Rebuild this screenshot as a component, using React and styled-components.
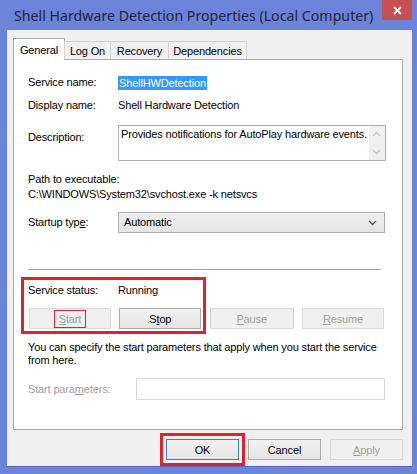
import styled, { createGlobalStyle } from "styled-components";

const GlobalStyle = createGlobalStyle`
  html, body {
    margin: 0;
    padding: 0;
  }
  body {
    font-family: "Liberation Sans", Arial, sans-serif;
    font-size: 11px;
    letter-spacing: -0.15px;
    color: #000;
  }
`;

const Frame = styled.div`
  width: 417px;
  height: 474px;
  box-sizing: border-box;
  background: #6b84d9;
  padding: 0 5px 7px 7px;
  display: flex;
  flex-direction: column;
`;

const TitleBar = styled.div`
  height: 30px;
  display: flex;
  justify-content: space-between;
  align-items: flex-start;
`;

const Title = styled.div`
  font-family: "Noto Sans", "Liberation Sans", sans-serif;
  font-size: 14.2px;
  letter-spacing: 0;
  line-height: 20px;
  color: #1f2340;
  padding: 6px 0 0 7px;
  white-space: nowrap;
`;

const CloseButton = styled.div`
  width: 30px;
  height: 20px;
  background: #c75050;
  color: #fff;
  display: flex;
  align-items: center;
  justify-content: center;
`;

const Body = styled.div`
  flex: 1;
  background: #f0f0f0;
  padding: 8px 9px 0 6px;
  display: flex;
  flex-direction: column;
  border-bottom: 1px solid #5068bd;
`;

const Tabs = styled.div`
  display: flex;
  align-items: flex-end;
  height: 22px;
  margin-bottom: -1px;
  position: relative;
  z-index: 1;
`;

const Tab = styled.div`
  box-sizing: border-box;
  height: ${(p) => (p.$active ? "22px" : "19px")};
  width: ${(p) => p.$w}px;
  border: 1px solid ${(p) => (p.$active ? "#adadad" : "#d0d0d0")};
  border-bottom: ${(p) => (p.$active ? "none" : "1px solid #adadad")};
  margin-left: ${(p) => (p.$active ? "0" : "-1px")};
  background: ${(p) => (p.$active ? "#fff" : "#f0f0f0")};
  display: flex;
  align-items: center;
  justify-content: center;
  padding-top: ${(p) => (p.$active ? "0" : "1px")};
  &:first-child {
    margin-left: 0;
  }
`;

const Panel = styled.div`
  box-sizing: border-box;
  height: 371px;
  background: #fff;
  border: 1px solid #adadad;
  padding: 15px 17px 0 14px;
  display: flex;
  flex-direction: column;
`;

const FieldRow = styled.div`
  display: grid;
  grid-template-columns: ${(p) => p.$label || 90}px 1fr;
  align-items: ${(p) => p.$align || "center"};
  margin-top: ${(p) => p.$gap || 0}px;
  line-height: 15px;
`;

const Label = styled.div`
  color: ${(p) => (p.$disabled ? "#a0a0a0" : "#000")};
  padding-top: ${(p) => p.$pt || 0}px;
`;

const Selected = styled.span`
  background: #3399ff;
  color: #fff;
  justify-self: start;
  line-height: 14px;
  padding: 0 1px;
`;

const TextBox = styled.div`
  box-sizing: border-box;
  height: 36px;
  border: 1px solid #abadb3;
  display: flex;
`;

const TextBoxText = styled.div`
  flex: 1;
  padding: 1px 2px;
  line-height: 15px;
  white-space: nowrap;
  overflow: hidden;
`;

const ScrollBar = styled.div`
  width: 16px;
  background: #f0f0f0;
  display: flex;
  flex-direction: column;
  align-items: center;
  justify-content: space-between;
  padding: 5px 0;
`;

const Block = styled.div`
  margin-top: ${(p) => p.$gap || 0}px;
  line-height: ${(p) => p.$lh || 15}px;
`;

const Select = styled.div`
  box-sizing: border-box;
  height: 21px;
  border: 1px solid #acacac;
  background: linear-gradient(#f0f0f0, #e5e5e5);
  display: flex;
  align-items: center;
  justify-content: space-between;
  padding: 0 7px 0 5px;
`;

const Separator = styled.div`
  height: 1px;
  background: #a0a0a0;
  margin: 36px 4px 0 0;
`;

const StatusSection = styled.div`
  position: relative;
  margin-top: 13px;
`;

const RedBox = styled.div`
  position: absolute;
  left: -7px;
  top: -6px;
  width: 185px;
  height: 57px;
  box-sizing: border-box;
  border: 3px solid #d9252c;
  pointer-events: none;
`;

const ButtonRow = styled.div`
  display: flex;
  justify-content: space-between;
  margin: 10px 1px 0 1px;
`;

const Button = styled.div`
  box-sizing: border-box;
  width: ${(p) => p.$w || 83}px;
  height: ${(p) => p.$h || 21}px;
  border: 1px solid ${(p) => (p.$default ? "#3c7fb1" : p.$disabled ? "#d9d9d9" : "#acacac")};
  background: ${(p) => (p.$disabled ? "#f0f0f0" : "linear-gradient(#f2f2f2, #e5e5e5)")};
  color: ${(p) => (p.$disabled ? "#a0a0a0" : "#000")};
  display: flex;
  align-items: center;
  justify-content: center;
  outline: ${(p) => (p.$marked ? "3px solid #d9252c" : "none")};
  outline-offset: 3px;
`;

const Marked = styled.span`
  border: 1px solid #d9252c;
  padding: 1px 4px;
  line-height: 14px;
`;

const Hint = styled.div`
  margin-top: 12px;
  line-height: 13px;
`;

const Input = styled.div`
  box-sizing: border-box;
  height: 22px;
  border: 1px solid #d9d9d9;
`;

const Footer = styled.div`
  display: flex;
  justify-content: flex-end;
  gap: 9px;
  padding-top: 9px;
`;

const Chevron = ({ up, color = "#555" }) => (
  <svg width="9" height="6" viewBox="0 0 9 6">
    <path
      d={up ? "M1 5 L4.5 1.5 L8 5" : "M1 1 L4.5 4.5 L8 1"}
      fill="none"
      stroke={color}
      strokeWidth="1.3"
    />
  </svg>
);

const App = () => {
  return (
    <>
      <GlobalStyle />
      <Frame>
        <TitleBar>
          <Title>Shell Hardware Detection Properties (Local Computer)</Title>
          <CloseButton>
            <svg width="9" height="9" viewBox="0 0 9 9">
              <path d="M1 1 L8 8 M8 1 L1 8" stroke="#fff" strokeWidth="1.8" />
            </svg>
          </CloseButton>
        </TitleBar>
        <Body>
          <Tabs>
            <Tab $active $w={52}>General</Tab>
            <Tab $w={47}>Log On</Tab>
            <Tab $w={59}>Recovery</Tab>
            <Tab $w={79}>Dependencies</Tab>
          </Tabs>
          <Panel>
            <FieldRow>
              <Label>Service name:</Label>
              <Selected>ShellHWDetection</Selected>
            </FieldRow>
            <FieldRow $gap={8}>
              <Label>Display name:</Label>
              <div>Shell Hardware Detection</div>
            </FieldRow>
            <FieldRow $gap={12} $align="start">
              <Label $pt={5}>Description:</Label>
              <TextBox>
                <TextBoxText>Provides notifications for AutoPlay hardware events.</TextBoxText>
                <ScrollBar>
                  <Chevron up color="#c4c4c4" />
                  <Chevron color="#c4c4c4" />
                </ScrollBar>
              </TextBox>
            </FieldRow>
            <Block $gap={11}>Path to executable:</Block>
            <Block>C:\WINDOWS\System32\svchost.exe -k netsvcs</Block>
            <FieldRow $gap={10}>
              <Label>
                Startup typ<u>e</u>:
              </Label>
              <Select>
                <span>Automatic</span>
                <Chevron />
              </Select>
            </FieldRow>
            <Separator />
            <StatusSection>
              <RedBox />
              <FieldRow>
                <Label>Service status:</Label>
                <div>Running</div>
              </FieldRow>
              <ButtonRow>
                <Button $disabled $w={82}>
                  <Marked>
                    <u>S</u>tart
                  </Marked>
                </Button>
                <Button $w={82}>
                  S<u>t</u>op
                </Button>
                <Button $disabled $w={84}>
                  <u>P</u>ause
                </Button>
                <Button $disabled $w={82}>
                  <u>R</u>esume
                </Button>
              </ButtonRow>
            </StatusSection>
            <Hint>
              You can specify the start parameters that apply when you start the service
              <br />
              from here.
            </Hint>
            <FieldRow $label={108} $gap={11}>
              <Label $disabled>
                Start para<u>m</u>eters:
              </Label>
              <Input />
            </FieldRow>
          </Panel>
          <Footer>
            <Button $default $marked $w={73} $h={21}>
              OK
            </Button>
            <Button $w={73} $h={21}>
              Cancel
            </Button>
            <Button $disabled $w={73} $h={21}>
              <u>A</u>pply
            </Button>
          </Footer>
        </Body>
      </Frame>
    </>
  );
};

export default App;
